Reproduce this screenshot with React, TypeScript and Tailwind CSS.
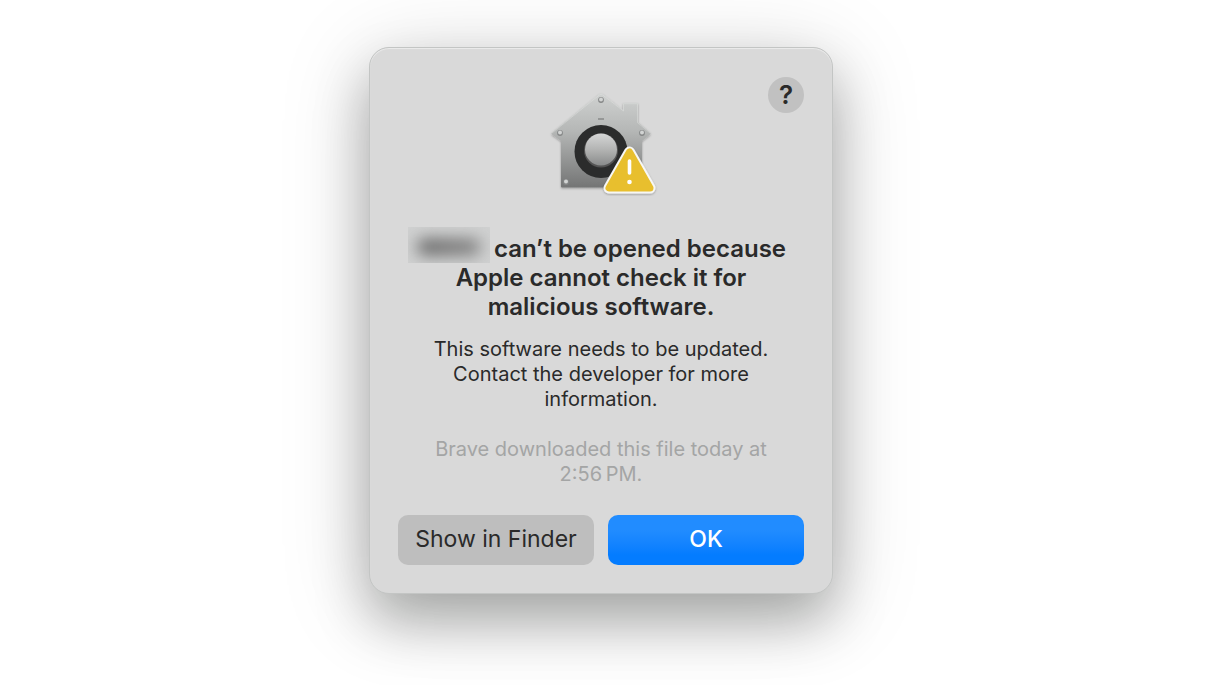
const rivets = [
  { x: 60, y: 15 },
  { x: 19, y: 48 },
  { x: 101, y: 48 },
  { x: 25, y: 97 },
];

function GatekeeperIcon() {
  return (
    <svg width="120" height="112" viewBox="0 0 120 112" fill="none" aria-hidden="true">
      <defs>
        <linearGradient id="metal" x1="60" y1="8" x2="60" y2="103" gradientUnits="userSpaceOnUse">
          <stop offset="0" stopColor="#d0d2d1" />
          <stop offset="0.4" stopColor="#b5b7b6" />
          <stop offset="1" stopColor="#737474" />
        </linearGradient>
        <linearGradient id="knob" x1="60" y1="48" x2="60" y2="82" gradientUnits="userSpaceOnUse">
          <stop offset="0" stopColor="#d6d7d7" />
          <stop offset="0.5" stopColor="#b2b3b2" />
          <stop offset="1" stopColor="#858787" />
        </linearGradient>
        <filter id="lift" x="-20%" y="-20%" width="140%" height="140%">
          <feDropShadow dx="0" dy="1" stdDeviation="1.2" floodColor="#000" floodOpacity="0.3" />
        </filter>
      </defs>

      {/* house */}
      <path
        filter="url(#lift)"
        d="M58.5 9Q60 7.8 61.5 9L82 25V19Q82 18 83 18H96Q97 18 97 19V37L109 47.5Q110 48.5 109 49.5L101 56V101.5Q101 102.5 100 102.5H21Q20 102.5 20 101.5V56L11 49.5Q10 48.5 11 47.5Z"
        fill="url(#metal)"
      />
      <path
        d="M11 48L58.5 9.8Q60 8.6 61.5 9.8L82.5 26V18.7H96.5V37.5L109 48"
        stroke="#e6e8e7"
        strokeWidth="0.8"
        opacity="0.5"
      />
      {rivets.map((rivet) => (
        <g key={`${rivet.x}-${rivet.y}`}>
          <circle cx={rivet.x} cy={rivet.y} r="2.9" fill="#858787" />
          <circle cx={rivet.x} cy={rivet.y - 0.4} r="2" fill="#d2d4d3" />
        </g>
      ))}
      <path d="M57 34H63" stroke="#8b8d8c" strokeWidth="1.6" />

      {/* dial */}
      <circle cx="60" cy="66.5" r="26.5" fill="#2b2c2c" />
      <circle cx="60" cy="65.5" r="17" fill="#555" />
      <circle cx="60" cy="64.5" r="16" fill="url(#knob)" />

      {/* warning badge */}
      <g filter="url(#lift)">
        <path d="M88.5 67L68 103H109Z" stroke="#f7f7f5" strokeWidth="11" strokeLinejoin="round" />
        <path d="M88.5 67L68 103H109Z" fill="#e8bf2e" stroke="#e8bf2e" strokeWidth="7" strokeLinejoin="round" />
      </g>
      <path d="M88.5 76V88" stroke="#fff" strokeWidth="3.6" strokeLinecap="round" />
      <circle cx="88.5" cy="97" r="2.3" fill="#fff" />
    </svg>
  );
}

export default function App() {
  return (
    <main className="flex min-h-screen items-start justify-center bg-white px-4 pt-[47px] pb-[91px] font-[Inter,'Liberation_Sans',sans-serif] md:pr-[30px]">
      <section
        role="alertdialog"
        aria-labelledby="alert-title"
        aria-describedby="alert-message"
        className="w-full max-w-[464px] rounded-[20px] border border-[#c3c5c4] bg-[#d9d9d9] px-7 pt-[29px] pb-7 text-center text-[#2a2a2a] shadow-[0_28px_54px_rgba(0,8,4,0.27),0_12px_90px_rgba(0,8,4,0.17),inset_0_1px_1px_rgba(255,255,255,0.5)]"
      >
        <div className="grid">
          <div className="col-start-1 row-start-1 mt-2 justify-self-center">
            <GatekeeperIcon />
          </div>
          <button
            type="button"
            aria-label="Help"
            className="col-start-1 row-start-1 flex size-9 items-center justify-center self-start justify-self-end rounded-full bg-[#c1c1c1] pb-0.5 text-[26px] font-semibold"
          >
            ?
          </button>
        </div>

        <h1 id="alert-title" className="mt-[37px] text-[24px] leading-[29px] font-semibold">
          <span className="flex items-center justify-center gap-1 pr-2">
            <span className="-mt-3 -mb-1 flex h-9 w-[82px] items-center justify-center overflow-hidden bg-[#d0d1d1] pt-1">
              <span className="h-4 w-16 rounded-full bg-linear-to-r from-[#606060] to-[#808080] blur-[8px]" />
            </span>
            can’t be opened because
          </span>
          Apple cannot check it for
          <br />
          malicious software.
        </h1>
        <p id="alert-message" className="mt-4 text-[20px] leading-[25px]">
          This software needs to be updated.
          <br />
          Contact the developer for more
          <br />
          information.
        </p>
        <p className="mt-[25px] text-[20px] leading-[25px] text-[#a4a5a5]">
          Brave downloaded this file today at
          <br />
          2:56&#8201;PM.
        </p>

        <div className="mt-7 grid grid-cols-2 gap-[14px] text-[23px]">
          <button type="button" className="h-[50px] rounded-[10px] bg-[#bebebe] pb-0.5">
            Show in Finder
          </button>
          <button
            type="button"
            className="h-[50px] rounded-[10px] bg-linear-to-b from-[#218cff] from-30% to-[#047cff] to-80% pb-0.5 font-medium text-white"
          >
            OK
          </button>
        </div>
      </section>
    </main>
  );
}
